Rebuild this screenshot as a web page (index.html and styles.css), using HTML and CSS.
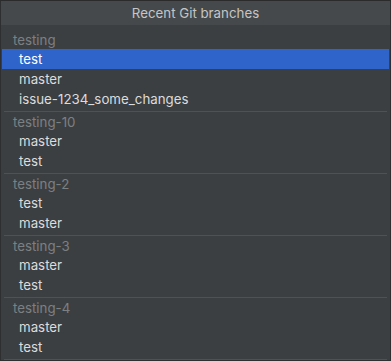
FILE: index.html
```html
<!DOCTYPE html>
<html>
<head>
<meta charset="utf-8">
<link rel="stylesheet" href="styles.css">
</head>
<body>
<div class="popup">
  <div class="title">Recent Git branches</div>
  <div class="list">
    <div class="group first">
      <div class="label">testing</div>
      <div class="item selected">test</div>
      <div class="item">master</div>
      <div class="item">issue-1234_some_changes</div>
    </div>
    <div class="group">
      <div class="label">testing-10</div>
      <div class="item">master</div>
      <div class="item">test</div>
    </div>
    <div class="group">
      <div class="label">testing-2</div>
      <div class="item">test</div>
      <div class="item">master</div>
    </div>
    <div class="group">
      <div class="label">testing-3</div>
      <div class="item">master</div>
      <div class="item">test</div>
    </div>
    <div class="group">
      <div class="label">testing-4</div>
      <div class="item">master</div>
      <div class="item">test</div>
    </div>
    <div class="group last"></div>
  </div>
</div>
</body>
</html>
```

FILE: styles.css
```css
html, body {
  margin: 0;
  padding: 0;
  background: #3c3f41;
}
.popup {
  width: 391px;
  height: 361px;
  box-sizing: border-box;
  border-top: 1px solid #2b2b2b;
  border-left: 1px solid #2d2f30;
  border-right: 1px solid #2d2f30;
  border-bottom: 1px solid #2d2f30;
  background: #3c3f41;
  font-family: Inter, "Liberation Sans", sans-serif;
  font-size: 13.3px;
  overflow: hidden;
}
.title {
  height: 24px;
  line-height: 24px;
  background: #46494b;
  color: #c3c5c7;
  text-align: center;
  font-size: 13.3px;
}
.list {
  padding-top: 5px;
}
.group {
  border-top: 1px solid #4f5254;
  margin: 0 3px;
  padding-bottom: 2px;
}
.group.first {
  border-top: none;
}
.group.last {
  padding: 0;
}
.label {
  height: 19px;
  line-height: 20px;
  padding-left: 9px;
  color: #7d8083;
}
.item {
  height: 20px;
  line-height: 20px;
  padding-left: 15px;
  color: #dadcde;
}
.item.selected {
  background: #2f65ca;
  color: #ffffff;
  margin: 0 -2px;
  padding-left: 17px;
}
```
